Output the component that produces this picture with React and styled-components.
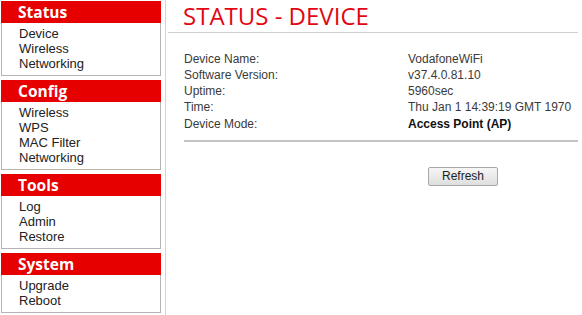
import styled, { createGlobalStyle } from 'styled-components'

const GlobalStyle = createGlobalStyle`
  html, body {
    margin: 0;
    padding: 0;
    background: #fff;
  }
  body {
    font-family: 'Liberation Sans', Arial, sans-serif;
    color: #333;
  }
`

const Page = styled.div`
  display: flex;
  width: 582px;
  height: 315px;
  overflow: hidden;
`

const Sidebar = styled.nav`
  width: 160px;
  padding: 1px 4px 0 1px;
  border-right: 1px solid #d4d4d4;
  flex-shrink: 0;
`

const Section = styled.div`
  margin-bottom: 4px;
`

const SectionTitle = styled.div`
  height: 22px;
  line-height: 22px;
  background: #e60000;
  color: #fff;
  font-family: 'Open Sans', sans-serif;
  font-weight: 700;
  font-size: 15.5px;
  padding-left: 17px;
`

const SectionBody = styled.div`
  border: 1px solid #b4b4b4;
  border-top: none;
  padding: 3px 0 4px 17px;
`

const NavLink = styled.a`
  display: block;
  font-size: 13px;
  line-height: 15px;
  color: #222;
  text-decoration: none;
`

const Main = styled.main`
  flex: 1;
  padding: 0 4px 0 2px;
`

const Title = styled.h1`
  margin: 0;
  padding: 1px 0 0 15px;
  height: 31px;
  font-family: 'Open Sans', sans-serif;
  font-weight: 400;
  font-size: 24px;
  line-height: 30px;
  color: #e30613;
  border-bottom: 1px solid #d0d0d0;
`

const Details = styled.div`
  margin: 18px 0 0 16px;
  padding-bottom: 7px;
  border-bottom: 2px solid #c4c4c4;
`

const Row = styled.div`
  display: grid;
  grid-template-columns: 224px 1fr;
  font-size: 12px;
  line-height: ${p => (p.last ? '18px' : '16px')};
  color: #3a3a3a;
`

const Value = styled.span`
  font-weight: ${p => (p.bold ? 700 : 400)};
  color: ${p => (p.bold ? '#111' : '#3a3a3a')};
`

const Actions = styled.div`
  padding: 24px 0 0 260px;
`

const Button = styled.button`
  width: 70px;
  height: 19px;
  padding: 0;
  font-family: 'Liberation Sans', Arial, sans-serif;
  font-size: 12px;
  color: #222;
  background: linear-gradient(#f6f6f6, #dedede);
  border: 1px solid #a8a8a8;
  border-radius: 2px;
`

const menu = [
  { title: 'Status', items: ['Device', 'Wireless', 'Networking'] },
  { title: 'Config', items: ['Wireless', 'WPS', 'MAC Filter', 'Networking'] },
  { title: 'Tools', items: ['Log', 'Admin', 'Restore'] },
  { title: 'System', items: ['Upgrade', 'Reboot'] },
]

const info = [
  ['Device Name:', 'VodafoneWiFi'],
  ['Software Version:', 'v37.4.0.81.10'],
  ['Uptime:', '5960sec'],
  ['Time:', 'Thu Jan 1 14:39:19 GMT 1970'],
]

export default function App() {
  return (
    <Page>
      <GlobalStyle />
      <Sidebar>
        {menu.map(section => (
          <Section key={section.title}>
            <SectionTitle>{section.title}</SectionTitle>
            <SectionBody>
              {section.items.map(item => (
                <NavLink key={item} href='#'>
                  {item}
                </NavLink>
              ))}
            </SectionBody>
          </Section>
        ))}
      </Sidebar>
      <Main>
        <Title>STATUS - DEVICE</Title>
        <Details>
          {info.map(([label, value]) => (
            <Row key={label}>
              <span>{label}</span>
              <Value>{value}</Value>
            </Row>
          ))}
          <Row last>
            <span>Device Mode:</span>
            <Value bold>Access Point (AP)</Value>
          </Row>
        </Details>
        <Actions>
          <Button>Refresh</Button>
        </Actions>
      </Main>
    </Page>
  )
}
